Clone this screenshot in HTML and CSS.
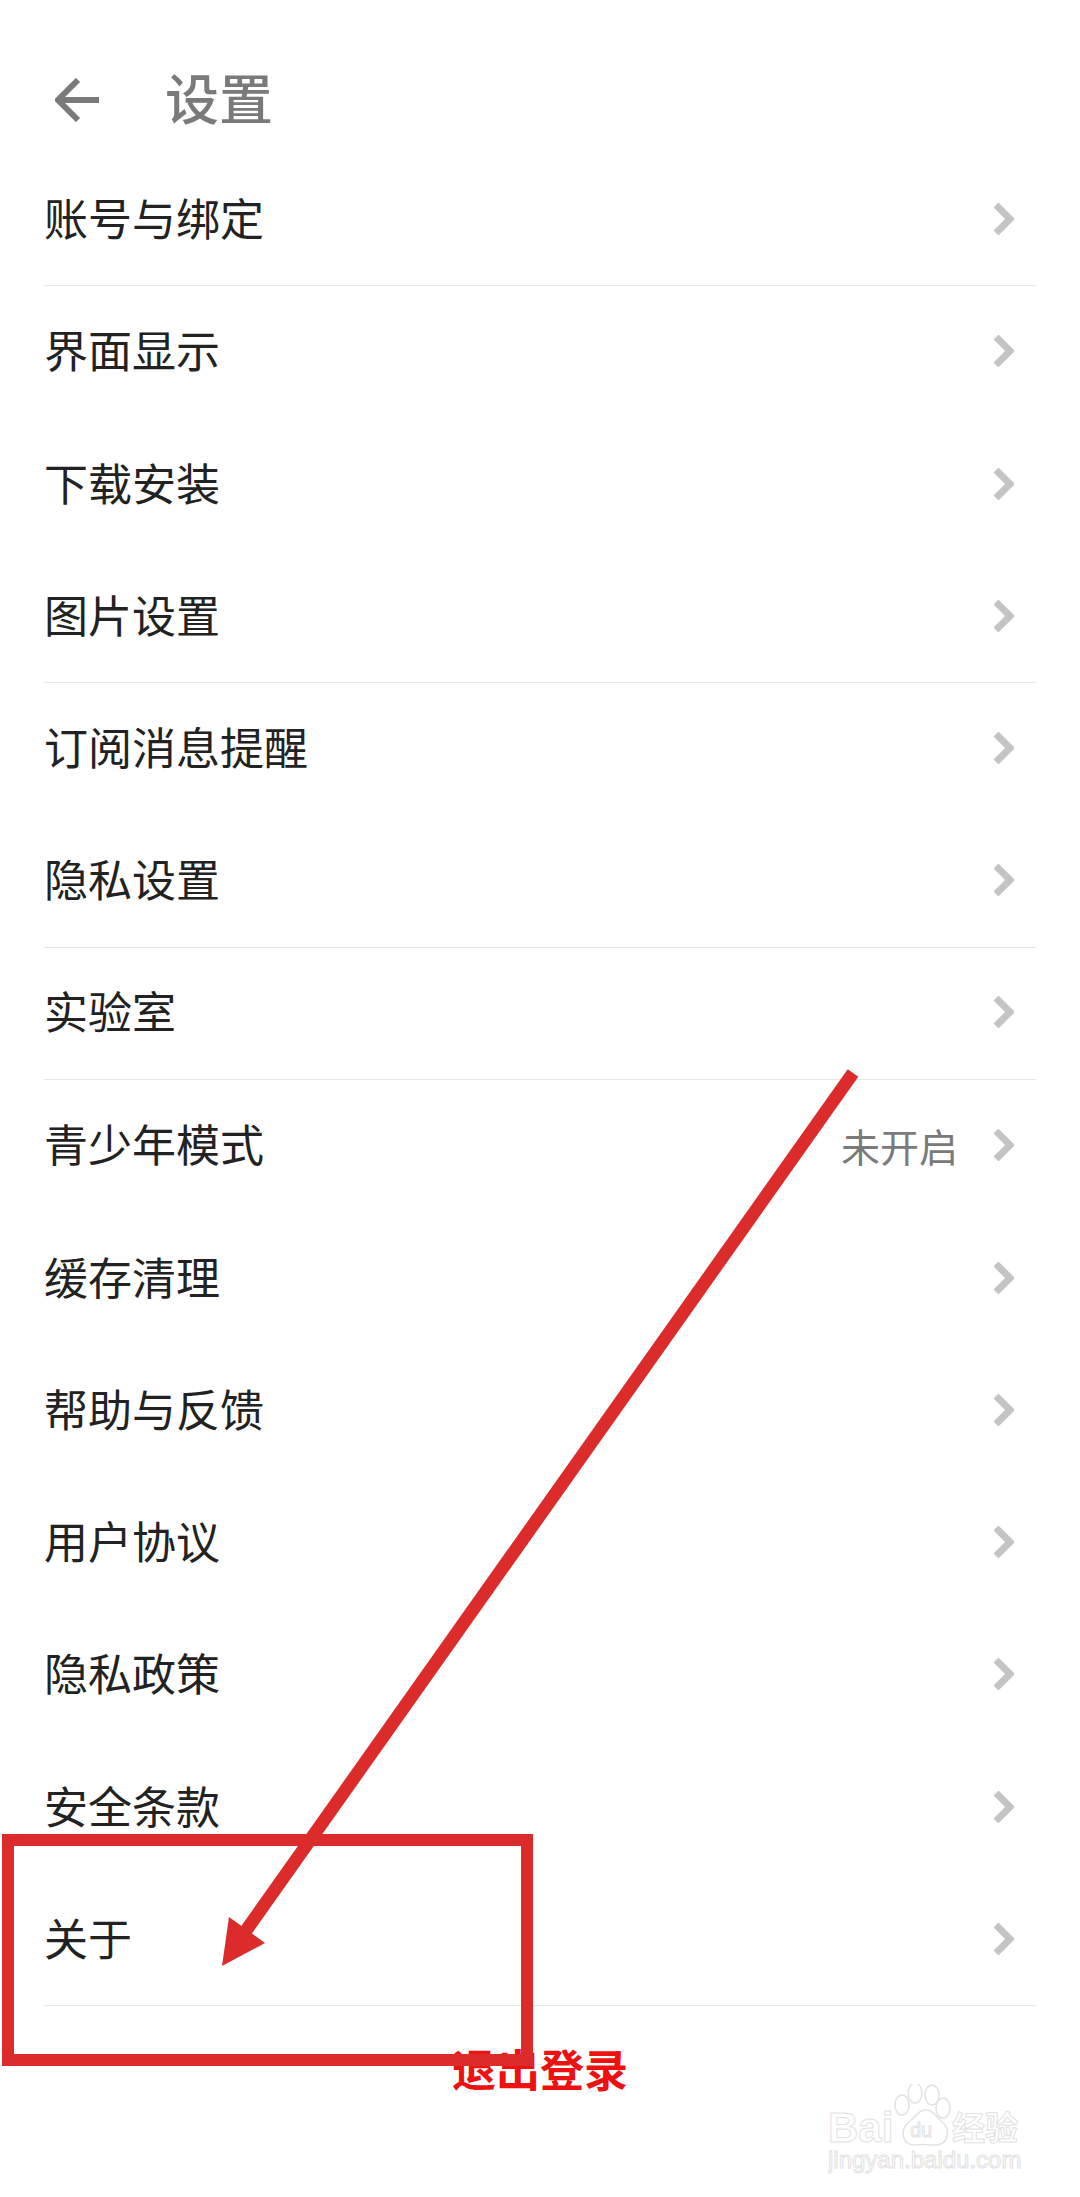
FILE: index.html
```html
<!DOCTYPE html>
<html lang="zh-CN">
<head>
    <meta charset="UTF-8"/>
    <meta name="viewport" content="width=device-width, initial-scale=1.0"/>
    <title>设置</title>
    <link rel="stylesheet" href="styles.css">
</head>
<body>
    <div class="page">
        <div class="header">
            <svg class="back" width="44" height="44" viewBox="0 0 44 44"><path d="M44 22H3M23 2 3 22l20 20"/></svg>
            <h1>设置</h1>
        </div>

        <div class="list">
            <div class="row line"><span class="name">账号与绑定</span><svg class="chev" width="20" height="32" viewBox="0 0 20 32"><path d="M2 2l14 14L2 30"/></svg></div>
            <div class="row"><span class="name">界面显示</span><svg class="chev" width="20" height="32" viewBox="0 0 20 32"><path d="M2 2l14 14L2 30"/></svg></div>
            <div class="row"><span class="name">下载安装</span><svg class="chev" width="20" height="32" viewBox="0 0 20 32"><path d="M2 2l14 14L2 30"/></svg></div>
            <div class="row line"><span class="name">图片设置</span><svg class="chev" width="20" height="32" viewBox="0 0 20 32"><path d="M2 2l14 14L2 30"/></svg></div>
            <div class="row"><span class="name">订阅消息提醒</span><svg class="chev" width="20" height="32" viewBox="0 0 20 32"><path d="M2 2l14 14L2 30"/></svg></div>
            <div class="row line"><span class="name">隐私设置</span><svg class="chev" width="20" height="32" viewBox="0 0 20 32"><path d="M2 2l14 14L2 30"/></svg></div>
            <div class="row line"><span class="name">实验室</span><svg class="chev" width="20" height="32" viewBox="0 0 20 32"><path d="M2 2l14 14L2 30"/></svg></div>
            <div class="row"><span class="name">青少年模式</span><span class="value">未开启</span><svg class="chev" width="20" height="32" viewBox="0 0 20 32"><path d="M2 2l14 14L2 30"/></svg></div>
            <div class="row"><span class="name">缓存清理</span><svg class="chev" width="20" height="32" viewBox="0 0 20 32"><path d="M2 2l14 14L2 30"/></svg></div>
            <div class="row"><span class="name">帮助与反馈</span><svg class="chev" width="20" height="32" viewBox="0 0 20 32"><path d="M2 2l14 14L2 30"/></svg></div>
            <div class="row"><span class="name">用户协议</span><svg class="chev" width="20" height="32" viewBox="0 0 20 32"><path d="M2 2l14 14L2 30"/></svg></div>
            <div class="row"><span class="name">隐私政策</span><svg class="chev" width="20" height="32" viewBox="0 0 20 32"><path d="M2 2l14 14L2 30"/></svg></div>
            <div class="row"><span class="name">安全条款</span><svg class="chev" width="20" height="32" viewBox="0 0 20 32"><path d="M2 2l14 14L2 30"/></svg></div>
            <div class="row line"><span class="name">关于</span><svg class="chev" width="20" height="32" viewBox="0 0 20 32"><path d="M2 2l14 14L2 30"/></svg></div>
        </div>

        <div class="logout">退出登录</div>

        <!-- red marks drawn over the screenshot -->
        <svg class="marks" width="1080" height="2197" viewBox="0 0 1080 2197">
            <rect class="mark-box" x="8" y="1840" width="519" height="220"/>
            <path class="mark-line" d="M853 1073 245 1932"/>
            <path class="mark-head" d="M222 1966 229 1917 265 1943z"/>
        </svg>

        <!-- watermark -->
        <svg class="watermark" width="200" height="90" viewBox="0 0 200 90">
            <text class="wm-bai" x="0" y="58">Bai</text>
            <ellipse class="wm-paw" cx="74" cy="21" rx="7" ry="10"/>
            <ellipse class="wm-paw" cx="87" cy="9" rx="7" ry="10"/>
            <ellipse class="wm-paw" cx="104" cy="11" rx="7" ry="10"/>
            <ellipse class="wm-paw" cx="115" cy="24" rx="7" ry="10"/>
            <path class="wm-paw" d="M98 26c8 0 10 7 16 12 8 6 8 22-6 23-7 0-14-1-21 0-14 0-15-16-6-23 7-5 9-12 17-12z"/>
            <text class="wm-du" x="82" y="53">du</text>
            <text class="wm-jy" x="124" y="56">经验</text>
            <text class="wm-url" x="0" y="84">jingyan.baidu.com</text>
        </svg>
    </div>
</body>
</html>
```

FILE: styles.css
```css
html, body {
    margin: 0;
    padding: 0;
    background: #fff;
}
.page {
    position: relative;
    width: 1080px;
    height: 2197px;
    overflow: hidden;
    font-family: "Noto Sans CJK SC", "Liberation Sans", sans-serif;
    color: #222;
}
.header {
    display: flex;
    align-items: center;
    height: 154px;
    padding: 46px 0 0 55px;
    box-sizing: border-box;
}
.back {
    fill: none;
    stroke: #7a7a7a;
    stroke-width: 6;
}
h1 {
    margin: 0 0 8px 66px;
    font-size: 54px;
    font-weight: 500;
    color: #7a7a7a;
}
.list {
    margin: 0 44px;
}
.row {
    display: flex;
    align-items: center;
    height: 132.3px;
    box-sizing: border-box;
    padding-right: 22px;
}
.line {
    border-bottom: 1.5px solid #e6e6e6;
}
.name {
    flex: 1;
    font-size: 44px;
    font-weight: 400;
    margin-bottom: 6px;
}
.value {
    font-size: 39px;
    color: #7a7a7a;
    margin: 0 36px 3px 0;
}
.chev {
    fill: none;
    stroke: #c4c4c4;
    stroke-width: 7;
    margin-bottom: 2px;
}
.logout {
    text-align: center;
    font-size: 44px;
    font-weight: 700;
    color: #ee1111;
    line-height: 124px;
}
.marks {
    position: absolute;
    left: 0;
    top: 0;
}
.mark-box {
    fill: none;
    stroke: #dc2b2b;
    stroke-width: 12;
}
.mark-line {
    fill: none;
    stroke: #dc2b2b;
    stroke-width: 13;
}
.mark-head {
    fill: #dc2b2b;
}
.watermark {
    position: absolute;
    left: 828px;
    top: 2084px;
    fill: none;
    stroke: #e2e2e2;
    stroke-width: 1.5;
}
.watermark text {
    font-family: "Liberation Sans", "Noto Sans CJK SC", sans-serif;
    stroke-width: 1;
}
.wm-bai {
    font-size: 42px;
    font-weight: 700;
}
.wm-du {
    font-size: 20px;
}
.wm-jy {
    font-size: 33px;
    font-weight: 700;
}
.wm-url {
    font-size: 24px;
}
```
